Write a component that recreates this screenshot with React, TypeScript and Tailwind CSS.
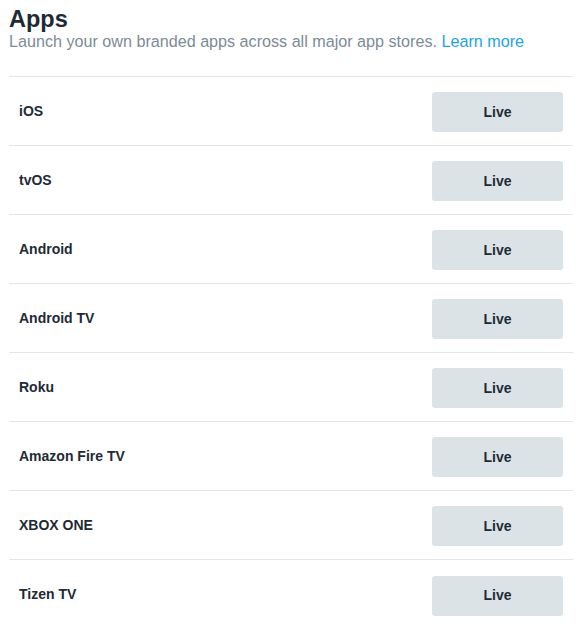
import React from "react";

const apps = ["iOS", "tvOS", "Android", "Android TV", "Roku", "Amazon Fire TV", "XBOX ONE", "Tizen TV"];

export default function App() {
  return (
    <div className="bg-white pl-[9px] pr-[7px] pt-[5px]" style={{ fontFamily: '"Liberation Sans", Arial, sans-serif' }}>
      <h1 className="text-[23.5px] leading-[28px] font-bold text-[#1d2b36]">Apps</h1>
      <p className="text-[16.15px] leading-[18px] -mt-[1px] text-[#7b8b97]">
        Launch your own branded apps across all major app stores. <span className="text-[#1aa3e6]">Learn more</span>
      </p>
      <div className="mt-[26px] border-t border-[#e2e6e9]">
        {apps.map((a, i) => (
          <div
            key={a}
            className={`flex items-center justify-between h-[69px] pt-[2px] pl-[10px] pr-[10px] ${i < apps.length - 1 ? "border-b border-[#e2e6e9]" : ""}`}
          >
            <span className="text-[14px] font-bold text-[#1d2b36] mb-[2px]">{a}</span>
            <button className="w-[131px] h-[40px] rounded-[3px] bg-[#dce3e6] text-[14px] font-bold text-[#1d2b36]">Live</button>
          </div>
        ))}
      </div>
    </div>
  );
}
